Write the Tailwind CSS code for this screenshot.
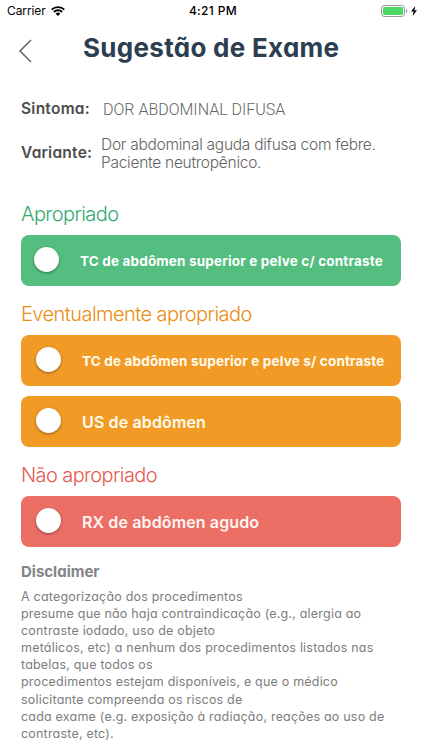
<!DOCTYPE html>
<html lang="pt-BR">
<head>
    <meta charset="UTF-8">
    <meta name="viewport" content="width=device-width, initial-scale=1.0">
    <title>Sugestão de Exame</title>
    <script src="https://cdn.jsdelivr.net/npm/@tailwindcss/browser@4"></script>
</head>
<body class="bg-white h-[750px] overflow-hidden font-['Inter',sans-serif] whitespace-nowrap">
    <!-- status bar -->
    <div class="grid grid-cols-3 items-center h-[22px] pl-[7px] pr-[5px] text-[12px] text-black">
        <div class="flex items-center gap-[5px]">
            <span class="tracking-[-0.1px]">Carrier</span>
            <svg class="w-[14px] h-[10px]" viewBox="0 0 14 10" fill="none" stroke="#000" stroke-width="1.9">
                <path d="M0.7 3.7a8.9 8.9 0 0 1 12.6 0"/>
                <path d="M2.9 6a5.8 5.8 0 0 1 8.2 0"/>
                <path d="M7 10L4.7 7.7a3.3 3.3 0 0 1 4.6 0z" fill="#000" stroke="none"/>
            </svg>
        </div>
        <div class="text-center font-medium tracking-[0.35px] pl-[2px]">4:21 PM</div>
        <div class="flex items-center justify-end gap-[3px]">
            <svg class="w-[27px] h-[12px]" viewBox="0 0 27 12">
                <rect x="0.5" y="0.5" width="23" height="11" rx="2.8" fill="none" stroke="#9a9a9a"/>
                <rect x="2" y="2" width="20" height="8" rx="1.4" fill="#4cd964"/>
                <path d="M25 4v4c.8-.3 1.3-1.1 1.3-2S25.800 4.300 25 4z" fill="#9a9a9a"/>
            </svg>
            <svg class="w-[6px] h-[10px]" viewBox="0 0 6 10"><path d="M4.300 0L0 5.600h2.600L1.700 10 6 4.200H3.400z" fill="#000"/></svg>
        </div>
    </div>

    <!-- header -->
    <div class="flex items-center h-[52px] pl-[18px]">
        <svg class="w-[14px] h-[24px] mt-[5px]" viewBox="0 0 14 24" fill="none" stroke="#707070" stroke-width="1.7"><path d="M13 1L2 12l11 11"/></svg>
        <h1 class="ml-[51px] text-[26px] leading-[30px] font-bold text-[#2c3e50] tracking-[0.29px] [font-feature-settings:'cv11']">Sugestão de Exame</h1>
    </div>

    <div class="pl-[21px] pr-[21px] pt-[25px]">
        <div class="flex items-center h-[20px] text-[15.500px]">
            <span class="w-[82px] font-semibold text-[#4c4c4c] tracking-[0.25px] [font-feature-settings:'cv11']">Sintoma:</span>
            <span class="mt-[1px] font-['Roboto',sans-serif] text-[16px] font-light text-[#636363]">DOR ABDOMINAL DIFUSA</span>
        </div>
        <div class="flex items-center h-[36px] mt-[16px] text-[15.500px]">
            <span class="w-[80px] font-semibold text-[#4c4c4c] tracking-[0.25px] [font-feature-settings:'cv11']">Variante:</span>
            <span class="mt-[2px] font-light text-[#636363] leading-[18px] tracking-[-0.27px]">Dor abdominal aguda difusa com febre.<br>Paciente neutropênico.</span>
        </div>

        <h2 class="mt-[29px] h-[30px] text-[20px] leading-[28px] font-light tracking-[-0.57px] text-[#34aa6c]">Apropriado</h2>
        <div class="mt-[5px] flex items-center h-[51px] rounded-[8px] bg-[#53be80] pl-[13px] text-white font-bold">
            <span class="size-[25px] -mt-[2px] rounded-full bg-white shadow-[0_1px_3px_rgba(0,0,0,0.4)]"></span>
            <span class="ml-[21px] mt-[2px] text-[13.500px] tracking-[0.17px]">TC de abdômen superior e pelve c/ contraste</span>
        </div>

        <h2 class="mt-[14px] h-[30px] text-[20px] leading-[28px] font-light tracking-[-0.55px] text-[#ea8c12]">Eventualmente apropriado</h2>
        <div class="mt-[5px] flex items-center h-[51px] rounded-[8px] bg-[#f19b26] pl-[15px] text-[#fffbed] font-bold">
            <span class="size-[25px] -mt-[3px] rounded-full bg-white shadow-[0_1px_3px_rgba(0,0,0,0.4)]"></span>
            <span class="ml-[21px] mt-[2px] text-[13.500px] tracking-[0.17px]">TC de abdômen superior e pelve s/ contraste</span>
        </div>
        <div class="mt-[10px] flex items-center h-[51px] rounded-[8px] bg-[#f19b26] pl-[15px] text-[#fffbed] font-semibold">
            <span class="size-[25px] -mt-[3px] rounded-full bg-white shadow-[0_1px_3px_rgba(0,0,0,0.4)]"></span>
            <span class="ml-[21px] mt-[1px] text-[16px] tracking-[0.13px]">US de abdômen</span>
        </div>

        <h2 class="mt-[14px] h-[30px] text-[20px] leading-[28px] font-light tracking-[-0.6px] text-[#e65a51]">Não apropriado</h2>
        <div class="mt-[5px] flex items-center h-[51px] rounded-[8px] bg-[#eb6f64] pl-[15px] text-[#fff5f4] font-semibold">
            <span class="size-[25px] -mt-[3px] rounded-full bg-white shadow-[0_1px_3px_rgba(0,0,0,0.4)]"></span>
            <span class="ml-[21px] mt-[1px] text-[16px] tracking-[0.13px]">RX de abdômen agudo</span>
        </div>

        <div class="mt-[15px] text-[#848484] [font-feature-settings:'cv11']">
            <h3 class="text-[15px] leading-[20px] font-bold">Disclaimer</h3>
            <p class="mt-[6px] text-[12.500px] leading-[17.100px] tracking-[0.2px] text-[#7d7d7d]">
                A categorização dos procedimentos<br>
                presume que não haja contraindicação (e.g., alergia ao<br>
                contraste iodado, uso de objeto<br>
                metálicos, etc) a nenhum dos procedimentos listados nas<br>
                tabelas, que todos os<br>
                procedimentos estejam disponíveis, e que o médico<br>
                solicitante compreenda os riscos de<br>
                cada exame (e.g. exposição à radiação, reações ao uso de<br>
                contraste, etc).
            </p>
        </div>
    </div>
</body>
</html>
